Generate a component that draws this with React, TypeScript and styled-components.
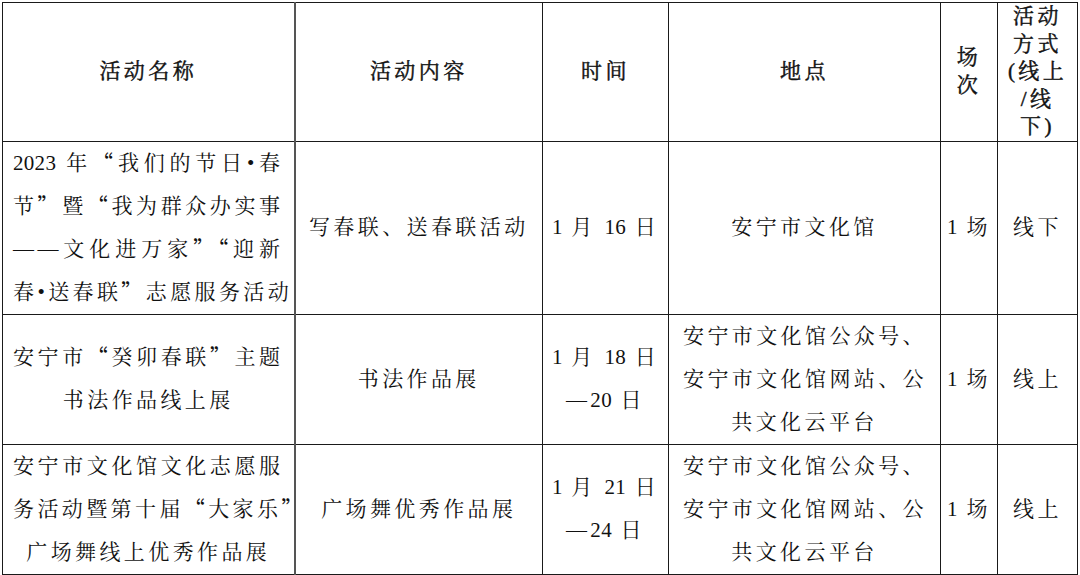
import React from 'react';
import styled, { createGlobalStyle } from 'styled-components';

type LineSpec = { text: string; justify?: boolean };

type RowSpec = {
    height: number;
    cells: LineSpec[][];
};

const J = (text: string): LineSpec => ({ text, justify: true });
const C = (text: string): LineSpec => ({ text });

const widths = [292, 248, 126, 272, 57, 80];
const pads = [10, 10, 6, 14, 2, 4];

const headers: LineSpec[][] = [
    [C('活动名称')],
    [C('活动内容')],
    [C('时间')],
    [C('地点')],
    [C('场'), C('次')],
    [C('活动'), C('方式'), C('(线上'), C('/线'), C('下)')],
];

const place = [J('安宁市文化馆公众号、'), J('安宁市文化馆网站、公'), C('共文化云平台')];

const rows: RowSpec[] = [
    {
        height: 172,
        cells: [
            [
                J('2023 年“我们的节日•春'),
                J('节”暨“我为群众办实事'),
                J('——文化进万家”“迎新'),
                J('春•送春联”志愿服务活动'),
            ],
            [C('写春联、送春联活动')],
            [C('1 月 16 日')],
            [C('安宁市文化馆')],
            [C('1 场')],
            [C('线下')],
        ],
    },
    {
        height: 130,
        cells: [
            [J('安宁市“癸卯春联”主题'), C('书法作品线上展')],
            [C('书法作品展')],
            [C('1 月 18 日'), C('—20 日')],
            place,
            [C('1 场')],
            [C('线上')],
        ],
    },
    {
        height: 129,
        cells: [
            [J('安宁市文化馆文化志愿服'), J('务活动暨第十届“大家乐”'), C('广场舞线上优秀作品展')],
            [C('广场舞优秀作品展')],
            [C('1 月 21 日'), C('—24 日')],
            place,
            [C('1 场')],
            [C('线上')],
        ],
    },
];

// quotes get the CJK full-width glyph, digit runs stay tight like Word prints them
function renderText(s: string) {
    const parts = s.split(/([“”]|[0-9]+)/);
    return parts.map((p, i) => {
        if (p === '“' || p === '”') return <Quote key={i}>{p}</Quote>;
        if (/^[0-9]+$/.test(p)) return <Num key={i}>{p}</Num>;
        return p;
    });
}

function App() {
    return (
        <>
            <GlobalStyle />
            <Page>
                <Table>
                    <colgroup>
                        {widths.map((w, i) => (
                            <col key={i} style={{ width: w }} />
                        ))}
                    </colgroup>
                    <tbody>
                        <Row $h={138}>
                            {headers.map((lines, i) => (
                                <HeadCell key={i} $pad={pads[i]} $first={i === 0}>
                                    {lines.map((l, k) => (
                                        <Line key={k} $lh={27.5}>
                                            {renderText(l.text)}
                                        </Line>
                                    ))}
                                </HeadCell>
                            ))}
                        </Row>
                        {rows.map((r, ri) => (
                            <Row key={ri} $h={r.height}>
                                {r.cells.map((lines, i) => (
                                    <Cell key={i} $pad={pads[i]} $first={i === 0}>
                                        {lines.map((l, k) => (
                                            <Line key={k} $lh={43} $justify={l.justify}>
                                                {renderText(l.text)}
                                            </Line>
                                        ))}
                                    </Cell>
                                ))}
                            </Row>
                        ))}
                    </tbody>
                </Table>
            </Page>
        </>
    );
}

const GlobalStyle = createGlobalStyle`
    html, body {
        margin: 0;
        padding: 0;
        background: #ffffff;
        overflow: hidden;
    }
    body {
        font-family: "Liberation Serif", "Noto Serif CJK SC", "Noto Sans CJK SC", serif;
        color: #111111;
    }
`;

const Page = styled.div`
    padding: 2px 0 0 2px;
`;

const Table = styled.table`
    border-collapse: collapse;
    table-layout: fixed;
    width: 1075px;
    border: 1px solid #000;
`;

const Row = styled.tr<{ $h: number }>`
    height: ${(p) => p.$h}px;
`;

const Cell = styled.td<{ $pad: number; $first?: boolean }>`
    border: 1px solid #1a1a1a;
    border-right: ${(p) => (p.$first ? '2px solid #555' : '1px solid #1a1a1a')};
    padding: 0 ${(p) => p.$pad}px;
    vertical-align: middle;
    text-align: center;
    font-size: 21px;
    letter-spacing: 3.4px;
    overflow: visible;
`;

const HeadCell = styled(Cell)`
    -webkit-text-stroke: 0.45px #111;
`;

const Line = styled.div<{ $justify?: boolean; $lh: number }>`
    height: ${(p) => p.$lh}px;
    line-height: ${(p) => p.$lh}px;
    white-space: nowrap;
    text-align: ${(p) => (p.$justify ? 'justify' : 'center')};
    text-align-last: ${(p) => (p.$justify ? 'justify' : 'center')};
    text-justify: inter-character;
`;

const Quote = styled.span`
    font-family: "Noto Sans CJK SC", sans-serif;
    line-height: 1;
`;

const Num = styled.span`
    letter-spacing: 0.3px;
`;

export default App;
